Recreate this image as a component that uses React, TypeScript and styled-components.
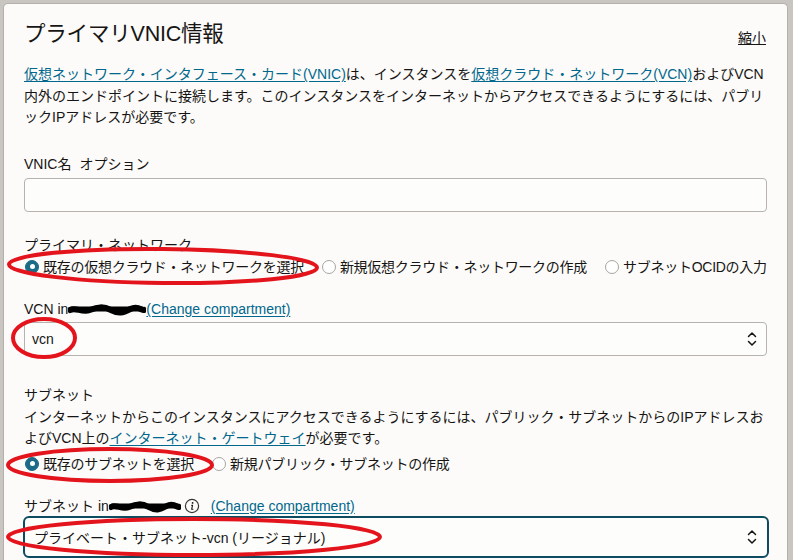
import React from "react";
import styled, { createGlobalStyle } from "styled-components";

const Global = createGlobalStyle`
  html, body { margin: 0; padding: 0; }
  body {
    background: #c9c6c2;
    font-family: "Liberation Sans", "Noto Sans CJK JP", sans-serif;
    color: #161513;
    overflow: hidden;
  }
`;

const Stage = styled.div`
  position: relative;
  width: 793px;
  height: 560px;
  overflow: hidden;
`;

const Card = styled.div`
  margin: 3px 5px 0 3px;
  height: 600px;
  background: #fcfbfa;
  border: 1px solid #b4b1ad;
  border-bottom: none;
  border-radius: 5px 5px 0 0;
  padding: 15px 20px 0 20px;
  box-sizing: border-box;
`;

const Header = styled.div`
  display: flex;
  justify-content: space-between;
  align-items: center;
  height: 31px;
`;

const Title = styled.h2`
  margin: 0;
  font-weight: 400;
  font-size: 21.5px;
  line-height: 31px;
  letter-spacing: -0.2px;
`;

const Collapse = styled.a`
  font-size: 14px;
  color: #161513;
  text-decoration: underline;
  margin-top: 5px;
  margin-right: 1px;
`;

const Para = styled.p<{ $mt: number }>`
  margin: ${(p) => p.$mt}px 0 0;
  font-size: 14px;
  line-height: 21.5px;
  white-space: nowrap;
`;

const Link = styled.a`
  color: #00688c;
  text-decoration: underline;
  text-underline-offset: 2px;
`;

const Label = styled.div<{ $mt: number }>`
  margin-top: ${(p) => p.$mt}px;
  font-size: 14px;
  line-height: 20px;
  display: flex;
  align-items: center;
  white-space: nowrap;
`;

const Optional = styled.span`
  margin-left: 8px;
`;

const TextInput = styled.div`
  margin-top: 4px;
  height: 34px;
  border: 1px solid #b6b3af;
  border-radius: 4px;
  background: #fdfdfc;
  box-sizing: border-box;
`;

const Select = styled.div<{ $focus?: boolean; $mt: number }>`
  margin-top: ${(p) => p.$mt}px;
  height: ${(p) => (p.$focus ? 42 : 34)}px;
  margin-left: ${(p) => (p.$focus ? -1 : 0)}px;
  margin-right: ${(p) => (p.$focus ? -2 : 0)}px;
  border: ${(p) => (p.$focus ? "2px solid #0d4b60" : "1px solid #b6b3af")};
  border-radius: ${(p) => (p.$focus ? 6 : 4)}px;
  background: #fdfdfc;
  box-sizing: border-box;
  display: flex;
  align-items: center;
  justify-content: space-between;
  padding: ${(p) => (p.$focus ? "0 10px 0 9px" : "0 9px 0 7px")};
  font-size: 14px;
`;

const SelectValue = styled.span`
  white-space: nowrap;
`;

const RadioRow = styled.div<{ $mt: number }>`
  margin-top: ${(p) => p.$mt}px;
  display: flex;
  align-items: center;
  gap: 17px;
  font-size: 14px;
  line-height: 20px;
  letter-spacing: -0.27px;
  white-space: nowrap;
`;

const RadioOption = styled.label`
  display: flex;
  align-items: center;
  gap: 4px;
`;

const RadioDot = styled.span<{ $on?: boolean }>`
  width: 14px;
  height: 14px;
  border-radius: 50%;
  box-sizing: border-box;
  margin-left: 1px;
  background: ${(p) => (p.$on ? "#1b6a86" : "#fff")};
  border: 1px solid ${(p) => (p.$on ? "#1b6a86" : "#a9a5a0")};
  display: flex;
  align-items: center;
  justify-content: center;
  &::after {
    content: "";
    display: ${(p) => (p.$on ? "block" : "none")};
    width: 5px;
    height: 5px;
    border-radius: 50%;
    background: #fff;
  }
`;

const SmallLink = styled(Link)<{ $ml?: number }>`
  font-size: 14px;
  margin-left: ${(p) => p.$ml ?? 0}px;
`;

const Overlay = styled.svg`
  position: absolute;
  left: 0;
  top: 0;
  pointer-events: none;
`;

const Chevrons = () => (
  <svg width="10" height="18" viewBox="0 0 10 18">
    <path d="M1.5 6.5 L5 3 L8.5 6.5" fill="none" stroke="#161513" strokeWidth="1.5" strokeLinecap="round" strokeLinejoin="round" />
    <path d="M1.5 11.5 L5 15 L8.5 11.5" fill="none" stroke="#161513" strokeWidth="1.5" strokeLinecap="round" strokeLinejoin="round" />
  </svg>
);

const InfoIcon = () => (
  <svg width="16" height="16" viewBox="0 0 16 16" style={{ margin: "0 0 0 3px" }}>
    <circle cx="8" cy="8" r="6.6" fill="none" stroke="#3a3836" strokeWidth="1.2" />
    <circle cx="8.6" cy="4.9" r="0.9" fill="#161513" />
    <path d="M7.6 7.2 L8.6 7.2 L7.6 11.3 L8.9 11.3" fill="none" stroke="#161513" strokeWidth="1.1" strokeLinecap="round" strokeLinejoin="round" />
  </svg>
);

const Redact = ({ w }: { w: number }) => (
  <svg width={w} height="14" viewBox={`0 0 ${w} 14`}>
    <path
      d={`M2 8 C ${w * 0.1} 5, ${w * 0.18} 11, ${w * 0.28} 8 S ${w * 0.45} 4, ${w * 0.55} 8 S ${w * 0.7} 11, ${w * 0.8} 7 S ${w * 0.95} 9, ${w - 2} 8`}
      fill="none"
      stroke="#000"
      strokeWidth="6"
      strokeLinecap="round"
    />
    <path d={`M${w * 0.05} 7 L${w * 0.95} 7`} stroke="#000" strokeWidth="5" strokeLinecap="round" />
  </svg>
);

export default function App() {
  return (
    <Stage>
      <Global />
      <Card>
        <Header>
          <Title>プライマリVNIC情報</Title>
          <Collapse>縮小</Collapse>
        </Header>
        <Para $mt={14}>
          <Link>仮想ネットワーク・インタフェース・カード(VNIC)</Link>は、インスタンスを
          <Link>仮想クラウド・ネットワーク(VCN)</Link>およびVCN
          <br />
          内外のエンドポイントに接続します。このインスタンスをインターネットからアクセスできるようにするには、パブリ
          <br />
          ックIPアドレスが必要です。
        </Para>

        <Label $mt={25}>
          VNIC名<Optional>オプション</Optional>
        </Label>
        <TextInput />

        <Label $mt={23}>プライマリ・ネットワーク</Label>
        <RadioRow $mt={2}>
          <RadioOption>
            <RadioDot $on />
            既存の仮想クラウド・ネットワークを選択
          </RadioOption>
          <RadioOption>
            <RadioDot />
            新規仮想クラウド・ネットワークの作成
          </RadioOption>
          <RadioOption>
            <RadioDot />
            サブネットOCIDの入力
          </RadioOption>
        </RadioRow>

        <Label $mt={22}>
          VCN in
          <Redact w={78} />
          <SmallLink>(Change compartment)</SmallLink>
        </Label>
        <Select $mt={3}>
          <SelectValue>vcn</SelectValue>
          <Chevrons />
        </Select>

        <Label $mt={29}>サブネット</Label>
        <Para $mt={2}>
          インターネットからこのインスタンスにアクセスできるようにするには、パブリック・サブネットからのIPアドレスお
          <br />
          よびVCN上の<Link>インターネット・ゲートウェイ</Link>が必要です。
        </Para>
        <RadioRow $mt={4}>
          <RadioOption>
            <RadioDot $on />
            既存のサブネットを選択
          </RadioOption>
          <RadioOption>
            <RadioDot />
            新規パブリック・サブネットの作成
          </RadioOption>
        </RadioRow>

        <Label $mt={22}>
          サブネット in
          <Redact w={72} />
          <InfoIcon />
          <SmallLink $ml={11}>(Change compartment)</SmallLink>
        </Label>
        <Select $focus $mt={0}>
          <SelectValue>プライベート・サブネット-vcn (リージョナル)</SelectValue>
          <Chevrons />
        </Select>
      </Card>
      <Overlay width="793" height="560" viewBox="0 0 793 560">
        <g fill="none" stroke="#e3141c" strokeWidth="4">
          <ellipse cx="163" cy="266" rx="154" ry="17" transform="rotate(0.6 163 266)" />
          <ellipse cx="44" cy="338" rx="31" ry="19" />
          <ellipse cx="110" cy="465" rx="102" ry="16" />
          <ellipse cx="194" cy="537" rx="186" ry="18" />
        </g>
      </Overlay>
    </Stage>
  );
}
